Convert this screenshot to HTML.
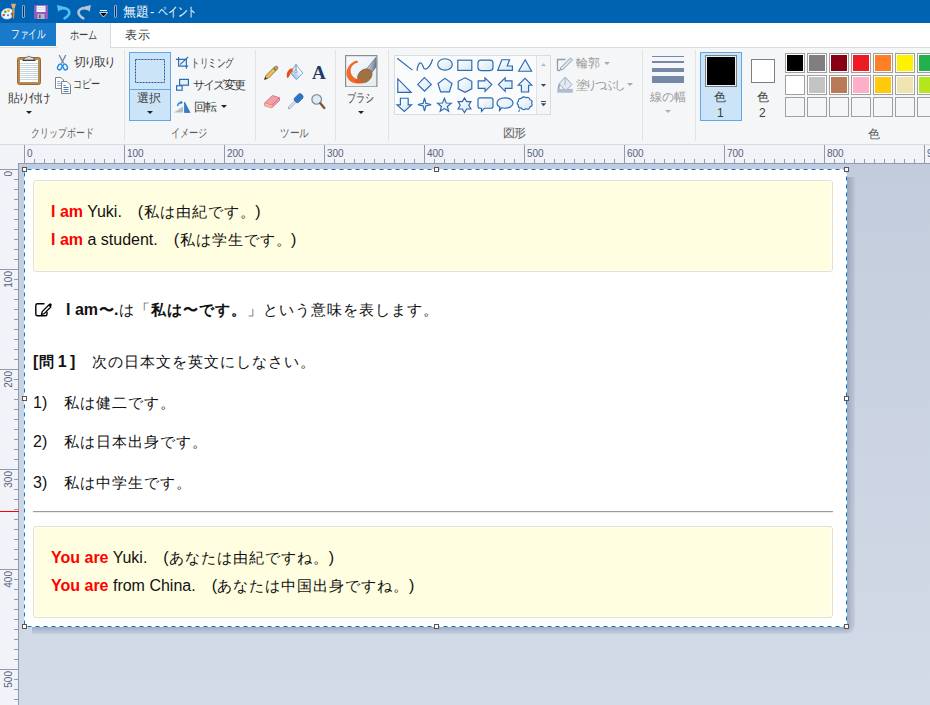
<!DOCTYPE html>
<html><head><meta charset="utf-8">
<style>
*{margin:0;padding:0;box-sizing:border-box}
html,body{width:930px;height:705px;overflow:hidden;background:#fff;font-family:"Liberation Sans",sans-serif}
.a{position:absolute}
#title{left:0;top:0;width:930px;height:23px;background:#0063b1}
#tabs{left:0;top:23px;width:930px;height:24px;background:#fff}
#ribbon{left:0;top:48px;width:930px;height:97px;background:#f5f6f7;border-bottom:1px solid #dadbdc}
.rt{font-size:12px;color:#3c3c3c;white-space:nowrap;line-height:14px}
.gl{font-size:12px;color:#5b5b5b;white-space:nowrap;line-height:14px}
.dis{color:#9a9a9a}
.div{width:1px;background:#e2e3e4;top:51px;height:90px}
.tri{width:0;height:0;border-left:4px solid transparent;border-right:4px solid transparent;border-top:4px solid #333}
#hruler{left:0;top:145px;width:930px;height:18px;background:#f1f3f8}
#vruler{left:0;top:163px;width:18px;height:542px;background:#f1f3f8}
#canvas{left:18px;top:163px;width:912px;height:542px;background:linear-gradient(#c3ccdc,#d3dbe8);border-left:1px solid #8e9bb1;border-top:1px solid #8e9bb1}
#img{left:24px;top:169px;width:823px;height:458px;background:#fff;overflow:hidden}
.box{position:absolute;background:#fffee0;border:1px solid #e4e2c6;border-radius:3px;box-shadow:inset 0 0 0 1px #fff}
.dt{position:absolute;font-size:16px;color:#111;white-space:nowrap;line-height:18px}
.red{color:#f00;font-weight:bold}
b{font-weight:bold}
.j{font-size:15px;letter-spacing:1px;padding-left:0.5px;margin-right:-0.5px}
.tt{font-size:12px;color:#fff;white-space:nowrap;line-height:14px}
.tabt{font-size:12px;color:#3c3c3c;white-space:nowrap;line-height:14px}
.rn{font-size:10px;color:#56627a;line-height:10px;white-space:nowrap}
.rv{writing-mode:vertical-rl;transform:rotate(180deg);}

</style></head><body>

<div id="title" class="a"></div>
<div class="a tt" style="left:123px;top:5px;font-size:13px;letter-spacing:-0.5px">無題</div><div class="a tt" style="left:150px;top:5px;font-size:13px">-</div><div class="a tt" style="left:158px;top:5px;font-size:13px;transform:scaleX(0.75);transform-origin:0 0">ペイント</div>
<div id="tabs" class="a"></div>
<div class="a" style="left:0;top:23px;width:56px;height:23px;background:#1979ca"></div>
<div class="a tabt" style="left:10.5px;top:27px;color:#fff;transform:scaleX(0.72);transform-origin:0 0">ファイル</div>
<div class="a" style="left:56px;top:23px;width:55px;height:25px;background:#f5f6f7;border-right:1px solid #dadbdc"></div>
<div class="a tabt" style="left:70.3px;top:28px;transform:scaleX(0.77);transform-origin:0 0">ホーム</div>
<div class="a tabt" style="left:125px;top:28px;letter-spacing:1px">表示</div>
<div class="a" style="left:0;top:46px;width:56px;height:1px;background:#fff"></div>
<div class="a" style="left:0;top:47px;width:57px;height:1px;background:#dcdddf"></div>
<div class="a" style="left:110px;top:47px;width:820px;height:1px;background:#dadbdc"></div>
<div id="ribbon" class="a"></div>
<!--RIB-->
<svg class="a" style="left:0px;top:3px" width="18" height="17" viewBox="0 0 18 17">
<path d="M1.5 11c0-3.3 3-5.5 6.5-5.5 2.8 0 4.3 1.3 4.3 2.8 0 1.2-1.5 1.4-1.5 2.6 0 1 1 1.5 1 2.4 0 1.8-2.4 2.7-4.6 2.7C3.5 16 1.5 14.3 1.5 11z" fill="#eef4f8" stroke="#d5e2ec" stroke-width="0.6"/>
<circle cx="3.8" cy="12" r="1.2" fill="#e2403a"/><circle cx="5.3" cy="8.8" r="1.2" fill="#3cb043"/><circle cx="8.5" cy="7.8" r="1.3" fill="#f4a300"/><circle cx="8" cy="12.3" r="1" fill="#3a7bd5"/>
<path d="M12.3 7.8 L14.7 7.8 L14 15.5 L13.5 16 L13 15.5z" fill="#f28a1e"/><path d="M11 0.8 L16 0.8 L14.6 5.5 L12.4 5.5z" fill="#e6ad6a"/><path d="M12.4 5.5 L14.6 5.5 L14.7 7.8 L12.3 7.8z" fill="#9aa3ad"/>
</svg>
<div class="a" style="left:22px;top:5px;width:3px;height:13px;border:1px solid #7fb0dc;background:#1b2a45;border-radius:1px"></div>
<svg class="a" style="left:34px;top:5px" width="14" height="14" viewBox="0 0 14 14">
<rect x="0" y="0" width="14" height="14" rx="0.5" fill="#8e5cc2"/>
<rect x="2.5" y="0.8" width="9" height="6.2" fill="#f2f4f8"/>
<line x1="3" y1="2.6" x2="11" y2="2.6" stroke="#c7d0de" stroke-width="0.6"/><line x1="3" y1="4.4" x2="11" y2="4.4" stroke="#c7d0de" stroke-width="0.6"/>
<rect x="3.5" y="9" width="7" height="5" fill="#b9b9be"/><rect x="5" y="9.8" width="1.6" height="3.5" fill="#6e4a9e"/>
</svg>
<svg class="a" style="left:56px;top:4px" width="15" height="16" viewBox="0 0 15 16">
<path d="M0.9 1 L2.2 7.8 L7.2 2.6z" fill="#4fc1f4"/>
<path d="M3.8 5 C9.5 2.8 13.6 5.5 13.3 9 C13.1 11.2 11.3 12.8 8.6 14.3" fill="none" stroke="#4fc1f4" stroke-width="2.6" stroke-linecap="round"/>
</svg>
<svg class="a" style="left:77px;top:4px" width="15" height="16" viewBox="0 0 15 16">
<path d="M13.95 1 L12.65 7.8 L7.65 2.6z" fill="#b4c4d8"/>
<path d="M11.05 5 C5.35 2.8 1.25 5.5 1.55 9 C1.75 11.2 3.55 12.8 6.25 14.3" fill="none" stroke="#b4c4d8" stroke-width="2.6" stroke-linecap="round"/>
</svg>
<div class="a" style="left:100px;top:10px;width:7px;height:1px;background:#fff"></div>
<svg class="a" style="left:99px;top:12px" width="9" height="6" viewBox="0 0 9 6"><path d="M0.5 0.5 L8.5 0.5 L4.5 5z" fill="#000" stroke="#fff" stroke-width="0.8"/></svg>
<div class="a" style="left:114px;top:5px;width:3px;height:13px;border:1px solid #7fb0dc;background:#1b2a45;border-radius:1px"></div>
<div class="a" style="left:124px;top:50px;width:1px;height:91px;background:#e2e3e4"></div>
<div class="a" style="left:255px;top:50px;width:1px;height:91px;background:#e2e3e4"></div>
<div class="a" style="left:335px;top:50px;width:1px;height:91px;background:#e2e3e4"></div>
<div class="a" style="left:388px;top:50px;width:1px;height:91px;background:#e2e3e4"></div>
<div class="a" style="left:642px;top:50px;width:1px;height:91px;background:#e2e3e4"></div>
<div class="a" style="left:695px;top:50px;width:1px;height:91px;background:#e2e3e4"></div>
<svg class="a" style="left:16px;top:54px" width="26" height="32" viewBox="0 0 26 32">
<rect x="1.5" y="3.5" width="23" height="27" rx="2" fill="#b98a4f" stroke="#97693a" stroke-width="1"/>
<rect x="4" y="6" width="18" height="22" fill="#fff"/>
<g stroke="#c8d6e2" stroke-width="1">
<line x1="4" y1="9.5" x2="22" y2="9.5"/><line x1="4" y1="11.5" x2="22" y2="11.5"/><line x1="4" y1="13.5" x2="22" y2="13.5"/><line x1="4" y1="15.5" x2="22" y2="15.5"/><line x1="4" y1="17.5" x2="22" y2="17.5"/><line x1="4" y1="19.5" x2="22" y2="19.5"/><line x1="4" y1="21.5" x2="22" y2="21.5"/><line x1="4" y1="23.5" x2="22" y2="23.5"/><line x1="4" y1="25.5" x2="22" y2="25.5"/>
</g>
<path d="M6.8 6.5 L19.2 6.5 L16.5 3.2 L14.8 3.2 Q13 1 11.2 3.2 L9.5 3.2z" fill="#dcdcdc" stroke="#5a5a5a" stroke-width="0.8"/>
<path d="M6.8 6.3 L19.2 6.3" stroke="#333" stroke-width="1.2"/>
</svg>
<div class="a rt" style="left:8px;top:91px;letter-spacing:-1.7px">貼り付け</div>
<div class="a" style="left:26px;top:111px;width:0;height:0;border-left:3px solid transparent;border-right:3px solid transparent;border-top:3px solid #222"></div>
<div class="a gl" style="left:31px;top:126px;transform:scaleX(0.744);transform-origin:0 0">クリップボード</div>
<svg class="a" style="left:55px;top:54px" width="14" height="17" viewBox="0 0 14 17">
<path d="M4.2 1 L8.6 9.5" stroke="#7c8696" stroke-width="1.4"/><path d="M10.8 1 L6.4 9.5" stroke="#7c8696" stroke-width="1.4"/>
<ellipse cx="4.8" cy="13" rx="2" ry="3" transform="rotate(25 4.8 13)" fill="none" stroke="#1e8ae6" stroke-width="1.4"/>
<ellipse cx="10.2" cy="13" rx="2" ry="3" transform="rotate(-25 10.2 13)" fill="none" stroke="#1e8ae6" stroke-width="1.4"/>
</svg>
<div class="a rt" style="left:74px;top:55px;letter-spacing:-2px">切り取り</div>
<svg class="a" style="left:54px;top:76px" width="18" height="18" viewBox="0 0 18 18">
<path d="M1.5 1.5 L7 1.5 L9.5 4 L9.5 12.5 L1.5 12.5z" fill="#fff" stroke="#848484" stroke-width="1"/>
<g stroke="#8fb4da" stroke-width="1"><line x1="3" y1="5.5" x2="6" y2="5.5"/><line x1="3" y1="7.5" x2="8" y2="7.5"/><line x1="3" y1="9.5" x2="8" y2="9.5"/></g>
<path d="M7.5 5.5 L13 5.5 L16.5 9 L16.5 17.5 L7.5 17.5z" fill="#fff" stroke="#848484" stroke-width="1"/>
<g stroke="#3d7ec9" stroke-width="1"><line x1="9.5" y1="9.5" x2="11.5" y2="9.5"/><line x1="9.5" y1="11.5" x2="14.5" y2="11.5"/><line x1="9.5" y1="13.5" x2="14.5" y2="13.5"/><line x1="9.5" y1="15.5" x2="14.5" y2="15.5"/></g>
</svg>
<div class="a rt" style="left:72.5px;top:77px;transform:scaleX(0.76);transform-origin:0 0">コピー</div>
<div class="a" style="left:129px;top:52px;width:42px;height:69px;background:#cce4f7;border:1px solid #62a6e6"></div>
<div class="a" style="left:130px;top:89px;width:40px;height:1px;background:#62a6e6"></div>
<svg class="a" style="left:134px;top:58px" width="32" height="26" viewBox="0 0 32 26"><rect x="1.5" y="1.5" width="29" height="23" fill="none" stroke="#2a5599" stroke-width="1" stroke-dasharray="2 1"/></svg>
<div class="a rt" style="left:137px;top:91px;letter-spacing:0px">選択</div>
<div class="a" style="left:147px;top:111px;width:0;height:0;border-left:3px solid transparent;border-right:3px solid transparent;border-top:3px solid #222"></div>
<svg class="a" style="left:174px;top:55px" width="16" height="15" viewBox="0 0 16 15">
<rect x="4.6" y="4.3" width="7.8" height="6.8" fill="#e8f2fa"/>
<path d="M4.6 2 V11.1 H14.2" fill="none" stroke="#2b6cb6" stroke-width="1.15"/>
<path d="M1.9 4.3 H12.4 V13.8" fill="none" stroke="#2b6cb6" stroke-width="1.15"/>
<path d="M6 9.7 L14.2 2" stroke="#2b6cb6" stroke-width="1.1"/>
</svg>
<div class="a rt" style="left:191px;top:56px;transform:scaleX(0.714);transform-origin:0 0">トリミング</div>
<svg class="a" style="left:175px;top:77px" width="16" height="15" viewBox="0 0 16 15">
<rect x="4.6" y="2.4" width="8.8" height="5.8" fill="#e6f1f9" stroke="#2b6cb6" stroke-width="1.2"/>
<rect x="1.6" y="8.8" width="5.5" height="4.4" fill="#fff" stroke="#2b6cb6" stroke-width="1.2"/>
</svg>
<div class="a rt" style="left:193px;top:78px;letter-spacing:-1.8px">サイズ変更</div>
<svg class="a" style="left:173px;top:100px" width="18" height="14" viewBox="0 0 18 14">
<path d="M1 12.5 L10 12.5 L10 6.5z" fill="#b9bcc0"/>
<path d="M11.5 2 L11.5 12.5 L17 12.5z" fill="#2f7fcf" stroke="#1e5fa8" stroke-width="0.6"/>
<path d="M4.5 6 C5 3.5 6.5 2.5 8.5 2.5" fill="none" stroke="#1e88e5" stroke-width="1.4"/>
<path d="M7.5 0.5 L10 2.5 L7.5 4.5z" fill="#1e88e5"/>
</svg>
<div class="a rt" style="left:194px;top:100px;letter-spacing:-1px">回転</div>
<div class="a" style="left:221px;top:105px;width:0;height:0;border-left:3px solid transparent;border-right:3px solid transparent;border-top:3px solid #222"></div>
<div class="a gl" style="left:171px;top:126px;transform:scaleX(0.76);transform-origin:0 0">イメージ</div>
<svg class="a" style="left:262px;top:64px" width="18" height="18" viewBox="0 0 18 18">
<path d="M2.5 15.5 L4 11.5 L13 2.5 L15.5 5 L6.5 14z" fill="#f2c14e" stroke="#7a5a20" stroke-width="0.8"/>
<path d="M2.5 15.5 L3.2 12.8 L5.2 14.8z" fill="#333"/>
<path d="M11.5 4 L14 6.5" stroke="#3d8b4a" stroke-width="1.5"/>
<path d="M13 2.5 L14.2 1.3 L16.7 3.8 L15.5 5z" fill="#d96b73"/>
</svg>
<svg class="a" style="left:285px;top:62px" width="20" height="20" viewBox="0 0 20 20">
<defs><linearGradient id="bk" x1="1" y1="0" x2="0" y2="1"><stop offset="0.3" stop-color="#fdfeff"/><stop offset="1" stop-color="#6fa3dc"/></linearGradient></defs>
<path d="M10.9 2.4 L17.9 11.1 L11.4 17.7 L5.1 10.6z" fill="url(#bk)" stroke="#6d9fd6" stroke-width="0.9"/>
<path d="M7.2 6.3 C5 6.8 2.8 8.5 2 11 C1.5 13 1.7 14.8 2.4 16.2 C3.6 15.6 4.4 14 5 12.5 C5.5 11.2 6.2 10.4 7.6 9.8z" fill="#ee4d12"/>
<path d="M11 2 V8.8" stroke="#8a8a8a" stroke-width="1"/><circle cx="10.9" cy="9.6" r="1.1" fill="#fff" stroke="#8a8a8a" stroke-width="0.7"/>
</svg>
<div class="a" style="left:312px;top:63px;font-family:'Liberation Serif',serif;font-weight:bold;font-size:19px;line-height:19px;color:#1f3a68">A</div>
<svg class="a" style="left:263px;top:93px" width="19" height="17" viewBox="0 0 19 17">
<path d="M1.5 10 L9.5 2.5 L16.5 4.8 L16.5 7.5 L8.8 14.8 L1.5 12.8z" fill="#f2a0a8" stroke="#c96b74" stroke-width="0.8"/>
<path d="M1.5 10 L8.8 12.2 L16.5 4.8" fill="none" stroke="#c96b74" stroke-width="0.8"/>
<path d="M1.5 10 L8.8 12.2 L8.8 14.8 L1.5 12.8z" fill="#f8b9a8"/>
</svg>
<svg class="a" style="left:286px;top:92px" width="19" height="19" viewBox="0 0 19 19">
<path d="M2.2 16.8 L2.8 14.8 L9 8.6 L10.4 10 L4.2 16.2z" fill="#e6f0fa" stroke="#8796a8" stroke-width="0.8"/>
<path d="M8 8 L11 11 L12.5 10.5 L17 6 Q17.5 4 16 2.6 Q14.6 1.2 12.8 1.8 L8.3 6.3z" fill="#2e75c9" stroke="#1f5aa0" stroke-width="0.6"/>
</svg>
<svg class="a" style="left:308px;top:92px" width="19" height="19" viewBox="0 0 19 19">
<circle cx="8.7" cy="7.4" r="4.8" fill="#dcecfb" stroke="#8d8d8d" stroke-width="1.3"/>
<path d="M12.3 11.2 L16.3 16" stroke="#7b5232" stroke-width="2.3" stroke-linecap="round"/>
</svg>
<div class="a gl" style="left:280px;top:126px;transform:scaleX(0.8);transform-origin:0 0">ツール</div>
<svg class="a" style="left:345px;top:55px" width="33" height="32" viewBox="0 0 33 32">
<defs><linearGradient id="bg1" x1="0" y1="0" x2="1" y2="1"><stop offset="0" stop-color="#f7fafc"/><stop offset="1" stop-color="#e1ecf2"/></linearGradient>
<linearGradient id="hd" x1="0" y1="0" x2="1" y2="0.3"><stop offset="0" stop-color="#f4f7fb"/><stop offset="1" stop-color="#6d7f9a"/></linearGradient></defs>
<rect x="0.6" y="0.6" width="31.3" height="31.3" fill="url(#bg1)" stroke="#8c8c8c" stroke-width="1.2"/>
<path d="M30.8 2.5 L21.5 14 L26 18.5 L31 12z" fill="url(#hd)" stroke="#556070" stroke-width="0.6"/>
<path d="M12.8 7.6 C13.5 6.5 12.5 5.3 11 5.8 C7 7 2.5 11 1.5 17 C1 21.5 3.5 25.5 7.5 27.5 C9.5 28.5 12 28.8 14.5 28.5 L15 24.5 C11.5 24.5 8 22.5 6.5 19.5 C5 16.5 5.3 13 7.5 10.5 C9 9 11.5 8.2 12.8 7.6z" fill="#f2692b"/>
<ellipse cx="19.8" cy="20.8" rx="8" ry="6.2" transform="rotate(-40 19.8 20.8)" fill="#9e7146" stroke="#7a5432" stroke-width="0.5"/>
<path d="M9 25.5 C11 27.5 14 28.8 17.2 28.5 L15.5 23.5 C13.5 24 11 24.5 9 25.5z" fill="#e85a22"/>
</svg>
<div class="a rt" style="left:346.6px;top:91px;transform:scaleX(0.76);transform-origin:0 0">ブラシ</div>
<div class="a" style="left:358px;top:111px;width:0;height:0;border-left:3px solid transparent;border-right:3px solid transparent;border-top:3px solid #222"></div>
<div class="a" style="left:394px;top:55px;width:157px;height:60px;background:#fafbfc;border:1px solid #dadbdc"></div>
<div class="a" style="left:536px;top:56px;width:14px;height:58px;background:#f5f6f7;border-left:1px solid #e2e3e4"></div>
<svg class="a" style="left:540px;top:63px" width="7" height="4" viewBox="0 0 7 4"><path d="M0.8 3 L6.2 3 L3.5 0.3z" fill="#b4bcc6"/></svg>
<svg class="a" style="left:540px;top:84px" width="7" height="4" viewBox="0 0 7 4"><path d="M0.8 0 L6.2 0 L3.5 2.8z" fill="#3e4a5c"/></svg>
<div class="a" style="left:541px;top:101px;width:5px;height:1px;background:#3e4a5c"></div>
<svg class="a" style="left:540px;top:103px" width="7" height="4" viewBox="0 0 7 4"><path d="M0.8 0.3 L6.2 0.3 L3.5 3.2z" fill="#3e4a5c"/></svg>
<svg class="a" style="left:394px;top:54px" width="142" height="62" viewBox="0 0 142 62">
<defs><linearGradient id="sg" x1="0" y1="0" x2="1" y2="1"><stop offset="0" stop-color="#ffffff"/><stop offset="1" stop-color="#d5e6f2"/></linearGradient></defs>
<path d="M3.2 4.3 L18.4 16.1" stroke="#2b68b0" stroke-width="1.2"/>
<path d="M23.2 16.8 C23.2 12.5 25 8.5 27 9 C29 9.5 28.5 14.5 31 15 C34 15.5 37.6 9.5 38.6 5.2" fill="none" stroke="#2b68b0" stroke-width="1.2"/>
<ellipse cx="51" cy="10.4" rx="7.3" ry="5.7" stroke="#2b68b0" stroke-width="1.15" fill="url(#sg)"/>
<rect x="63.8" y="6.2" width="14" height="10.2" stroke="#2b68b0" stroke-width="1.15" fill="url(#sg)"/>
<rect x="84" y="6.1" width="15" height="10.5" rx="3" stroke="#2b68b0" stroke-width="1.15" fill="url(#sg)"/>
<path d="M103.8 16.3 L107.8 5.7 L115.6 5.7 L113.2 12 L118.4 12 L118.4 16.3z" stroke="#2b68b0" stroke-width="1.15" fill="url(#sg)"/>
<path d="M131.2 5.8 L137.6 17.2 L124.6 17.2z" stroke="#2b68b0" stroke-width="1.15" fill="url(#sg)"/>
<path d="M3.8 24.8 L3.8 38.3 L17.2 38.3z" stroke="#2b68b0" stroke-width="1.15" fill="url(#sg)"/>
<path d="M30.5 23.6 L37.3 30.4 L30.5 37.2 L23.7 30.4z" stroke="#2b68b0" stroke-width="1.15" fill="url(#sg)"/>
<path d="M51 24.4 L58 29.5 L55.4 37.8 L46.6 37.8 L44 29.5z" stroke="#2b68b0" stroke-width="1.15" fill="url(#sg)"/>
<path d="M71 23.8 L77.8 27.3 L77.8 34.8 L71 38.3 L64.2 34.8 L64.2 27.3z" stroke="#2b68b0" stroke-width="1.15" fill="url(#sg)"/>
<path d="M84.2 26.8 L91 26.8 L91 23.8 L97.8 30.6 L91 37.4 L91 34.4 L84.2 34.4z" stroke="#2b68b0" stroke-width="1.15" fill="url(#sg)"/>
<path d="M118 26.8 L111.2 26.8 L111.2 23.8 L104.4 30.6 L111.2 37.4 L111.2 34.4 L118 34.4z" stroke="#2b68b0" stroke-width="1.15" fill="url(#sg)"/>
<path d="M124.2 31.2 L131 24.4 L137.8 31.2 L134.6 31.2 L134.6 38 L127.4 38 L127.4 31.2z" stroke="#2b68b0" stroke-width="1.15" fill="url(#sg)"/>
<path d="M6.4 44.2 L14.2 44.2 L14.2 50.8 L17.6 50.8 L10.3 57.5 L3 50.8 L6.4 50.8z" stroke="#2b68b0" stroke-width="1.15" fill="url(#sg)"/>
<path d="M30.50 44.00 L31.84 49.26 L37.10 50.60 L31.84 51.94 L30.50 57.20 L29.16 51.94 L23.90 50.60 L29.16 49.26z" stroke="#2b68b0" stroke-width="1.15" fill="url(#sg)"/>
<path d="M50.40 44.30 L52.22 48.99 L57.25 49.28 L53.35 52.46 L54.63 57.32 L50.40 54.60 L46.17 57.32 L47.45 52.46 L43.55 49.28 L48.58 48.99z" stroke="#2b68b0" stroke-width="1.15" fill="url(#sg)"/>
<path d="M70.50 43.90 L72.65 47.58 L76.91 47.60 L74.80 51.30 L76.91 55.00 L72.65 55.02 L70.50 58.70 L68.35 55.02 L64.09 55.00 L66.20 51.30 L64.09 47.60 L68.35 47.58z" stroke="#2b68b0" stroke-width="1.15" fill="url(#sg)"/>
<path d="M86 43.8 H97 Q99 43.8 99 45.8 V52.2 Q99 54.2 97 54.2 H90.5 L87.5 57.5 L87.5 54.2 H86 Q84 54.2 84 52.2 V45.8 Q84 43.8 86 43.8z" stroke="#2b68b0" stroke-width="1.15" fill="url(#sg)"/>
<path d="M106 53.2 C103.5 52 103 50.5 103 49 C103 46 106.5 43.8 111 43.8 C115.5 43.8 119 46 119 49 C119 52 115.5 54.2 111 54.2 C109.8 54.2 108.5 54 107.5 53.8 L105.3 57.3z" stroke="#2b68b0" stroke-width="1.15" fill="url(#sg)"/>
<path d="M137.60 49.30 Q139.26 51.97 136.01 52.90 Q135.30 56.05 131.98 54.81 Q129.24 56.98 127.40 54.15 Q123.91 54.31 124.41 51.22 Q121.80 49.30 124.41 47.38 Q123.91 44.29 127.40 44.45 Q129.24 41.62 131.98 43.79 Q135.30 42.55 136.01 45.70 Q139.26 46.63 137.60 49.30 z" stroke="#2b68b0" stroke-width="1.15" fill="url(#sg)"/>
<path d="M125.5 55.5 L124.8 58" stroke="#2b68b0" stroke-width="1"/>
</svg>
<div class="a gl" style="left:503px;top:126px;letter-spacing:-1px">図形</div>
<svg class="a" style="left:556px;top:57px" width="18" height="15" viewBox="0 0 18 15">
<path d="M1.5 13.5 V2.5 H9.5" fill="none" stroke="#8a9bb5" stroke-width="1.3"/>
<path d="M1.5 13.5 H4" stroke="#8a9bb5" stroke-width="1.3"/>
<path d="M4 13 L4.8 10.5 L14.5 1 L16.5 3 L6.8 12.5z" fill="#dfe6ef" stroke="#8a9bb5" stroke-width="1"/>
</svg>
<div class="a rt dis" style="left:576px;top:56px;letter-spacing:0px">輪郭</div>
<div class="a" style="left:604px;top:62px;width:0;height:0;border-left:3px solid transparent;border-right:3px solid transparent;border-top:3px solid #a9a9a9"></div>
<svg class="a" style="left:556px;top:76px" width="18" height="18" viewBox="0 0 18 18">
<path d="M9.2 1.1 L15.9 8.6 L9.7 14.8 L3.1 7.7z" fill="#e4eaf2" stroke="#9aa9be" stroke-width="1"/>
<path d="M3.3 7.5 C2 9 1.5 10.5 1.8 13 L3.6 13 C3.4 11.5 3.8 10 4.6 9z" fill="#9aa9be"/>
<path d="M9.2 1.5 V7.5" stroke="#9aa9be" stroke-width="0.8"/><circle cx="9.2" cy="8" r="0.9" fill="#fff" stroke="#9aa9be" stroke-width="0.6"/>
<rect x="1.2" y="12.9" width="15.6" height="3.8" fill="#aebbd0"/>
</svg>
<div class="a rt dis" style="left:576px;top:78px;letter-spacing:-2.6px">塗りつぶし</div>
<div class="a" style="left:627px;top:83px;width:0;height:0;border-left:3px solid transparent;border-right:3px solid transparent;border-top:3px solid #a9a9a9"></div>
<div class="a" style="left:652px;top:56px;width:32px;height:1px;background:#7688a7"></div>
<div class="a" style="left:652px;top:61px;width:32px;height:2px;background:#7688a7"></div>
<div class="a" style="left:652px;top:68px;width:32px;height:4px;background:#7688a7"></div>
<div class="a" style="left:652px;top:76px;width:32px;height:7px;background:#7688a7"></div>
<div class="a rt dis" style="left:650px;top:90px;letter-spacing:0px">線の幅</div>
<div class="a" style="left:665px;top:110px;width:0;height:0;border-left:3px solid transparent;border-right:3px solid transparent;border-top:3px solid #b0b0b0"></div>
<div class="a" style="left:700px;top:52px;width:42px;height:69px;background:#cce4f7;border:1px solid #62a6e6"></div>
<div class="a" style="left:705px;top:55px;width:32px;height:32px;border:1px solid #7f7f7f;background:#e6eef6;padding:1px"><div style="width:28px;height:28px;background:#000"></div></div>
<div class="a rt" style="left:714px;top:90px;">色</div>
<div class="a rt" style="left:717px;top:106px;">1</div>
<div class="a" style="left:751px;top:59px;width:24px;height:24px;border:1px solid #7f7f7f;background:#fff"></div>
<div class="a rt" style="left:757px;top:90px;">色</div>
<div class="a rt" style="left:759px;top:106px;">2</div>
<div class="a" style="left:785px;top:53px;width:20px;height:20px;border:1px solid #a0a0a0;background:#fff;padding:1px"><div style="width:16px;height:16px;background:#000000"></div></div>
<div class="a" style="left:807px;top:53px;width:20px;height:20px;border:1px solid #a0a0a0;background:#fff;padding:1px"><div style="width:16px;height:16px;background:#7f7f7f"></div></div>
<div class="a" style="left:829px;top:53px;width:20px;height:20px;border:1px solid #a0a0a0;background:#fff;padding:1px"><div style="width:16px;height:16px;background:#880015"></div></div>
<div class="a" style="left:851px;top:53px;width:20px;height:20px;border:1px solid #a0a0a0;background:#fff;padding:1px"><div style="width:16px;height:16px;background:#ed1c24"></div></div>
<div class="a" style="left:873px;top:53px;width:20px;height:20px;border:1px solid #a0a0a0;background:#fff;padding:1px"><div style="width:16px;height:16px;background:#ff7f27"></div></div>
<div class="a" style="left:895px;top:53px;width:20px;height:20px;border:1px solid #a0a0a0;background:#fff;padding:1px"><div style="width:16px;height:16px;background:#fff200"></div></div>
<div class="a" style="left:917px;top:53px;width:20px;height:20px;border:1px solid #a0a0a0;background:#fff;padding:1px"><div style="width:16px;height:16px;background:#22b14c"></div></div>
<div class="a" style="left:785px;top:75px;width:20px;height:20px;border:1px solid #a0a0a0;background:#fff;padding:1px"><div style="width:16px;height:16px;background:#ffffff"></div></div>
<div class="a" style="left:807px;top:75px;width:20px;height:20px;border:1px solid #a0a0a0;background:#fff;padding:1px"><div style="width:16px;height:16px;background:#c3c3c3"></div></div>
<div class="a" style="left:829px;top:75px;width:20px;height:20px;border:1px solid #a0a0a0;background:#fff;padding:1px"><div style="width:16px;height:16px;background:#b97a57"></div></div>
<div class="a" style="left:851px;top:75px;width:20px;height:20px;border:1px solid #a0a0a0;background:#fff;padding:1px"><div style="width:16px;height:16px;background:#ffaec9"></div></div>
<div class="a" style="left:873px;top:75px;width:20px;height:20px;border:1px solid #a0a0a0;background:#fff;padding:1px"><div style="width:16px;height:16px;background:#ffc90e"></div></div>
<div class="a" style="left:895px;top:75px;width:20px;height:20px;border:1px solid #a0a0a0;background:#fff;padding:1px"><div style="width:16px;height:16px;background:#efe4b0"></div></div>
<div class="a" style="left:917px;top:75px;width:20px;height:20px;border:1px solid #a0a0a0;background:#fff;padding:1px"><div style="width:16px;height:16px;background:#b5e61d"></div></div>
<div class="a" style="left:785px;top:97px;width:20px;height:20px;border:1px solid #a0a0a0;background:#f5f6f7"></div>
<div class="a" style="left:807px;top:97px;width:20px;height:20px;border:1px solid #a0a0a0;background:#f5f6f7"></div>
<div class="a" style="left:829px;top:97px;width:20px;height:20px;border:1px solid #a0a0a0;background:#f5f6f7"></div>
<div class="a" style="left:851px;top:97px;width:20px;height:20px;border:1px solid #a0a0a0;background:#f5f6f7"></div>
<div class="a" style="left:873px;top:97px;width:20px;height:20px;border:1px solid #a0a0a0;background:#f5f6f7"></div>
<div class="a" style="left:895px;top:97px;width:20px;height:20px;border:1px solid #a0a0a0;background:#f5f6f7"></div>
<div class="a" style="left:917px;top:97px;width:20px;height:20px;border:1px solid #a0a0a0;background:#f5f6f7"></div>
<div class="a gl" style="left:868px;top:127px;">色</div>
<!--/RIB-->


<div id="hruler" class="a"></div>
<div class="a" style="left:24px;top:159px;width:906px;height:4px;background:repeating-linear-gradient(to right,#8e9bb1 0 1px,transparent 1px 10px)"></div>
<div class="a" style="left:24px;top:145px;width:906px;height:18px;background:repeating-linear-gradient(to right,#8e9bb1 0 1px,transparent 1px 100px)"></div>
<div class="a rn" style="left:27px;top:149px">0</div>
<div class="a rn" style="left:127px;top:149px">100</div>
<div class="a rn" style="left:227px;top:149px">200</div>
<div class="a rn" style="left:327px;top:149px">300</div>
<div class="a rn" style="left:427px;top:149px">400</div>
<div class="a rn" style="left:527px;top:149px">500</div>
<div class="a rn" style="left:627px;top:149px">600</div>
<div class="a rn" style="left:727px;top:149px">700</div>
<div class="a rn" style="left:827px;top:149px">800</div>
<div class="a rn" style="left:927px;top:149px">900</div>
<div id="vruler" class="a"></div>
<div class="a" style="left:14px;top:169px;width:4px;height:536px;background:repeating-linear-gradient(to bottom,#8e9bb1 0 1px,transparent 1px 10px)"></div>
<div class="a" style="left:0;top:169px;width:18px;height:536px;background:repeating-linear-gradient(to bottom,#8e9bb1 0 1px,transparent 1px 100px)"></div>
<div class="a rn rv" style="left:4px;top:171px;width:18px">0</div>
<div class="a rn rv" style="left:4px;top:271px;width:18px">100</div>
<div class="a rn rv" style="left:4px;top:371px;width:18px">200</div>
<div class="a rn rv" style="left:4px;top:471px;width:18px">300</div>
<div class="a rn rv" style="left:4px;top:571px;width:18px">400</div>
<div class="a rn rv" style="left:4px;top:671px;width:18px">500</div>

<div id="canvas" class="a"></div>
<div class="a" style="left:0;top:511px;width:19px;height:1px;background:#ff0000"></div>
<div id="img" class="a">
  <div class="box" style="left:9px;top:11px;width:800px;height:92px"></div>
  <div class="dt" style="left:27px;top:34px"><span class="red">I am</span> Yuki.<span class="j">　</span>(<span class="j">私は由紀です。</span>)</div>
  <div class="dt" style="left:27px;top:62px"><span class="red">I am</span> a student.<span class="j">　</span>(<span class="j">私は学生です。</span>)</div>
  <svg class="a" style="left:10px;top:133px" width="20" height="16" viewBox="0 0 20 16"><path d="M10.5 1.8 H3.5 Q1.8 1.8 1.8 3.5 V12 Q1.8 13.8 3.5 13.8 H11.3 Q13 13.8 13 12 V9.8" fill="none" stroke="#000" stroke-width="1.4"/><path d="M8.2 9.6 L14.8 3 L16.8 5 L10.2 11.6 L7.5 12.3z" fill="#fff" stroke="#000" stroke-width="1.3" stroke-linejoin="round"/><path d="M14.6 2.4 L15.6 1.4 Q16.2 0.9 16.8 1.5 L17.6 2.3 Q18.1 2.9 17.6 3.5 L16.6 4.5" fill="#000"/></svg>
  <div class="dt" style="left:42px;top:132px"><b>I am<span class="j">〜</span>.</b><span class="j">は「</span><b><span class="j">私は〜です。</span></b><span class="j">」という意味を表します。</span></div>
  <div class="dt" style="left:9px;top:184px"><b style="word-spacing:-1px">[<span class="j">問</span> 1 ]</b><span class="j">　次の日本文を英文にしなさい。</span></div>
  <div class="dt" style="left:9px;top:225px">1)<span class="j">　私は健二です。</span></div>
  <div class="dt" style="left:9px;top:264px">2)<span class="j">　私は日本出身です。</span></div>
  <div class="dt" style="left:9px;top:305px">3)<span class="j">　私は中学生です。</span></div>
  <div class="a" style="left:9px;top:342px;width:800px;height:2px;border-top:1px solid #9c9c9c;border-bottom:1px solid #ececec"></div>
  <div class="box" style="left:9px;top:357px;width:800px;height:92px"></div>
  <div class="dt" style="left:27px;top:380px"><span class="red">You are</span> Yuki.<span class="j">　</span>(<span class="j">あなたは由紀ですね。</span>)</div>
  <div class="dt" style="left:27px;top:408px"><span class="red">You are</span> from China.<span class="j">　</span>(<span class="j">あなたは中国出身ですね。</span>)</div>
</div>
<!--SEL-->
<div class="a" style="left:847px;top:177px;width:8px;height:450px;background:linear-gradient(to right,rgba(110,125,150,0.5),rgba(110,125,150,0.1))"></div>
<div class="a" style="left:32px;top:627px;width:815px;height:7px;background:linear-gradient(to bottom,rgba(110,125,150,0.5),rgba(110,125,150,0.1))"></div>
<div class="a" style="left:847px;top:627px;width:8px;height:7px;background:radial-gradient(circle at 0 0,rgba(110,125,150,0.5),rgba(110,125,150,0) 8px)"></div>
<svg class="a" style="left:0;top:0" width="930" height="705">
<g fill="none" stroke="#0078d7" stroke-width="1" stroke-dasharray="4 4">
<path d="M24.5 169.5 H846.5" stroke-dashoffset="5"/><path d="M24.5 626.5 H846.5" stroke-dashoffset="5"/>
<path d="M24.5 169.5 V626.5" stroke-dashoffset="5"/><path d="M846.5 169.5 V626.5" stroke-dashoffset="1"/></g>
<g fill="#fff" stroke="#555" stroke-width="1">
<rect x="22.5" y="167.5" width="4" height="4"/><rect x="434.5" y="167.5" width="4" height="4"/><rect x="844.5" y="167.5" width="4" height="4"/>
<rect x="22.5" y="396.5" width="4" height="4"/><rect x="844.5" y="396.5" width="4" height="4"/>
<rect x="22.5" y="624.5" width="4" height="4"/><rect x="434.5" y="624.5" width="4" height="4"/><rect x="844.5" y="624.5" width="4" height="4"/>
</g></svg>
<!--/SEL-->
</body></html>
